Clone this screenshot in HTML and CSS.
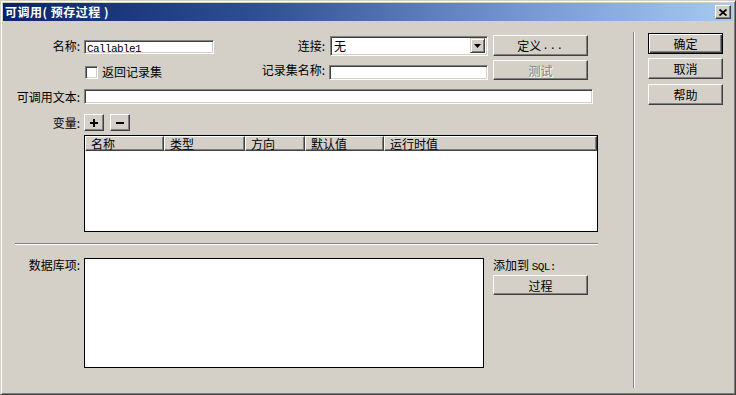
FILE: index.html
```html
<!DOCTYPE html>
<html>
<head>
    <meta charset="UTF-8">
    <title>可调用( 预存过程 )</title>
    <link rel="stylesheet" href="styles.css">
</head>
<body>
    <div class="window">
        <div class="titlebar">
            <span class="title">可调用( 预存过程 )</span>
            <span class="close">
                <svg width="8" height="7" viewBox="0 0 8 7"><path d="M0.5 0.5L7.5 6.5M7.5 0.5L0.5 6.5" stroke="#000" stroke-width="1.8" fill="none"/></svg>
            </span>
        </div>
        <div class="body">
            <div class="main">
                <!-- 名称 / 连接 -->
                <div class="row row-1">
                    <span class="lbl">名称:</span>
                    <div class="field field-name"><span class="mono">Callable1</span></div>
                    <span class="lbl lbl-mid">连接:</span>
                    <div class="field select">
                        <span class="select-val">无</span>
                        <span class="arrow"><svg width="7" height="4" viewBox="0 0 7 4"><polygon points="0,0 7,0 3.5,4" fill="#000"/></svg></span>
                    </div>
                    <div class="btn btn-side">定义<span class="mono dots">...</span></div>
                </div>
                <!-- 返回记录集 / 记录集名称 -->
                <div class="row row-2">
                    <div class="check-group">
                        <span class="checkbox"></span>
                        <span class="check-label">返回记录集</span>
                    </div>
                    <span class="lbl lbl-mid lbl-rs">记录集名称:</span>
                    <div class="field field-rs"></div>
                    <div class="btn btn-side disabled">测试</div>
                </div>
                <!-- 可调用文本 -->
                <div class="row row-3">
                    <span class="lbl">可调用文本:</span>
                    <div class="field field-text"></div>
                </div>
                <!-- 变量 -->
                <div class="row row-4">
                    <span class="lbl">变量:</span>
                    <div class="btn btn-icon">
                        <svg width="8" height="8" viewBox="0 0 8 8"><rect x="3" y="0" width="2" height="8" fill="#000"/><rect x="0" y="3" width="8" height="2" fill="#000"/></svg>
                    </div>
                    <div class="btn btn-icon">
                        <svg width="8" height="8" viewBox="0 0 8 8"><rect x="0" y="3" width="8" height="2" fill="#000"/></svg>
                    </div>
                </div>
                <div class="listview">
                    <div class="list-head">
                        <span class="hcell" style="width:79px">名称</span>
                        <span class="hcell" style="width:81px">类型</span>
                        <span class="hcell" style="width:60px">方向</span>
                        <span class="hcell" style="width:79px">默认值</span>
                        <span class="hcell" style="width:213px">运行时值</span>
                    </div>
                </div>
                <div class="hsep"></div>
                <!-- 数据库项 -->
                <div class="row row-db">
                    <span class="lbl lbl-top">数据库项:</span>
                    <div class="dbbox"></div>
                    <div class="sql-col">
                        <span class="sql-label">添加到 <span class="mono">SQL:</span></span>
                        <div class="btn btn-side btn-proc">过程</div>
                    </div>
                </div>
            </div>
            <div class="vsep"></div>
            <div class="side">
                <div class="btn btn-dlg default">确定</div>
                <div class="btn btn-dlg">取消</div>
                <div class="btn btn-dlg">帮助</div>
            </div>
        </div>
    </div>
</body>
</html>
```

FILE: styles.css
```css
body{
    margin:0;
    background:#d4d0c8;
    font-family:"Noto Sans CJK SC","Liberation Sans",sans-serif;
    font-size:12px;
    color:#000;
}
.window{
    width:736px;
    height:395px;
    box-sizing:border-box;
    border:1px solid;
    border-color:#d4d0c8 #404040 #404040 #d4d0c8;
    box-shadow:inset 1px 1px #fff, inset -1px -1px #808080;
    padding:2px;
    display:flex;
    flex-direction:column;
}
.titlebar{
    height:18px;
    flex:none;
    display:flex;
    align-items:center;
    justify-content:space-between;
    padding:0 2px 0 2px;
    background:linear-gradient(90deg,#0a246a 0%,#2f4f94 35%,#7494d0 70%,#a6caf0 100%);
}
.title{
    color:#fff;
    font-weight:bold;
    font-size:12px;
    line-height:18px;
    letter-spacing:0.5px;
    white-space:pre;
}
.close{
    width:16px;
    height:14px;
    box-sizing:border-box;
    border:1px solid;
    border-color:#fff #404040 #404040 #fff;
    box-shadow:inset -1px -1px #808080;
    background:#d4d0c8;
    display:flex;
    align-items:center;
    justify-content:center;
}
.body{
    flex:1;
    display:flex;
}
.main{
    width:630px;
    padding-top:14px;
}
.vsep{
    width:0;
    height:356px;
    margin-top:11px;
    border-left:1px solid #808080;
    border-right:1px solid #fff;
}
.side{
    padding:12px 0 0 13px;
    display:flex;
    flex-direction:column;
}
.mono{
    font-family:"Liberation Mono",monospace;
    font-size:11px;
    letter-spacing:-0.6px;
}

/* rows */
.row{
    display:flex;
    align-items:center;
}
.row-1{ height:21px; }
.row-2{ height:20px; margin-top:4px; }
.row-3{ height:15px; margin-top:9px; }
.row-4{ height:17px; margin-top:10px; }
.row-db{ align-items:flex-start; margin-top:13px; }
.lbl{
    box-sizing:border-box;
    width:79px;
    margin-right:2px;
    padding-right:2px;
    text-align:right;
    white-space:nowrap;
    line-height:14px;
}
.lbl-mid{
    width:113px;
    margin-right:3px;
}
.lbl-rs{ margin-right:2px; }

/* sunken fields */
.field{
    box-sizing:border-box;
    background:#fff;
    border:1px solid;
    border-color:#808080 #fff #fff #808080;
    box-shadow:inset 1px 1px #404040, inset -1px -1px #d4d0c8;
}
.field-name{
    width:130px;
    height:14px;
    margin-top:3px;
    padding-left:2px;
    line-height:11px;
}
.select{
    width:158px;
    height:20px;
    display:flex;
    align-items:center;
    justify-content:space-between;
    padding:0 2px 0 3px;
}
.select-val{ line-height:14px; }
.arrow{
    width:15px;
    height:15px;
    box-sizing:border-box;
    border:1px solid;
    border-color:#d4d0c8 #404040 #404040 #d4d0c8;
    box-shadow:inset 1px 1px #fff, inset -1px -1px #808080;
    background:#d4d0c8;
    display:flex;
    align-items:center;
    justify-content:center;
}
.field-rs{
    width:159px;
    height:15px;
    margin-top:5px;
}
.field-text{
    width:509px;
    height:15px;
}

/* raised buttons */
.btn{
    box-sizing:border-box;
    background:#d4d0c8;
    border:1px solid;
    border-color:#fff #404040 #404040 #fff;
    box-shadow:inset -1px -1px #808080;
    display:flex;
    align-items:center;
    justify-content:center;
    white-space:nowrap;
}
.btn-side{
    width:95px;
    height:21px;
    margin-left:5px;
}
.row-2 .btn-side{ height:20px; }
.dots{ letter-spacing:0.5px; margin-left:1px; }
.disabled{
    color:#808080;
    text-shadow:1px 1px #fff;
}
.btn-icon{
    width:20px;
    height:17px;
}
.btn-icon + .btn-icon{ margin-left:6px; }
.btn-dlg{
    width:75px;
    height:21px;
    margin-bottom:4px;
}
.btn-dlg + .btn-dlg + .btn-dlg{ margin-top:1px; }
.default{
    border:1px solid #000;
    box-shadow:inset 1px 1px #fff, inset -1px -1px #404040, inset -2px -2px #808080;
}

/* checkbox */
.check-group{
    width:211px;
    display:flex;
    align-items:center;
    padding-left:82px;
    box-sizing:border-box;
}
.checkbox{
    width:13px;
    height:13px;
    box-sizing:border-box;
    background:#fff;
    border:1px solid;
    border-color:#808080 #fff #fff #808080;
    box-shadow:inset 1px 1px #404040, inset -1px -1px #d4d0c8;
    margin-top:4px;
}
.check-label{
    margin-left:4px;
    margin-top:3px;
    line-height:14px;
}

/* list view */
.listview{
    width:514px;
    height:97px;
    margin:4px 0 0 81px;
    box-sizing:border-box;
    border:1px solid #000;
    background:#fff;
}
.list-head{
    display:flex;
    height:15px;
}
.hcell{
    box-sizing:border-box;
    height:15px;
    padding-left:5px;
    line-height:13px;
    background:#d4d0c8;
    border:1px solid;
    border-color:#fff #404040 #404040 #fff;
    box-shadow:inset -1px -1px #808080;
}

.hsep{
    width:583px;
    height:0;
    margin:11px 0 0 12px;
    border-top:1px solid #808080;
    border-bottom:1px solid #fff;
}
.dbbox{
    width:400px;
    height:110px;
    box-sizing:border-box;
    border:1px solid #000;
    background:#fff;
}
.sql-col{
    display:flex;
    flex-direction:column;
    margin-left:4px;
}
.sql-label{
    margin-left:5px;
    line-height:14px;
}
.btn-proc{
    height:20px;
    margin-top:1px;
}
```
